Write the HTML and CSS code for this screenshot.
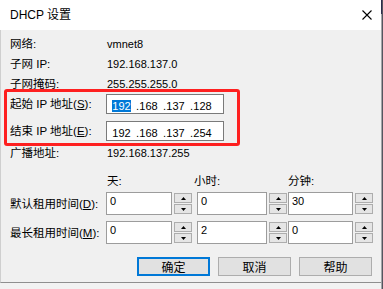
FILE: index.html
```html
<!DOCTYPE html>
<html lang="zh-CN">
<head>
<meta charset="utf-8">
<title>DHCP 设置</title>
<link rel="stylesheet" href="styles.css">
</head>
<body>
<div class="screen">
  <div class="window">
    <div class="titlebar">
      <span class="title">DHCP 设置</span>
      <span class="close"><svg width="10" height="10" viewBox="0 0 10 10"><path d="M0.5 0.5 L9.5 9.5 M9.5 0.5 L0.5 9.5" stroke="#000" stroke-width="1.1" fill="none"/></svg></span>
    </div>
    <div class="body">
      <div class="row"><span class="label">网络:</span><span class="value">vmnet8</span></div>
      <div class="row"><span class="label">子网 IP:</span><span class="value">192.168.137.0</span></div>
      <div class="row"><span class="label">子网掩码:</span><span class="value">255.255.255.0</span></div>

      <div class="row ip-row">
        <span class="label">起始 IP 地址(<u>S</u>):</span>
        <div class="ip-box">
          <span class="ip-field sel">192</span><span class="ip-dot">.</span>
          <span class="ip-field">168</span><span class="ip-dot">.</span>
          <span class="ip-field">137</span><span class="ip-dot">.</span>
          <span class="ip-field">128</span>
        </div>
      </div>
      <div class="row ip-row second">
        <span class="label">结束 IP 地址(<u>E</u>):</span>
        <div class="ip-box">
          <span class="ip-field">192</span><span class="ip-dot">.</span>
          <span class="ip-field">168</span><span class="ip-dot">.</span>
          <span class="ip-field">137</span><span class="ip-dot">.</span>
          <span class="ip-field">254</span>
        </div>
      </div>
      <div class="row broadcast"><span class="label">广播地址:</span><span class="value">192.168.137.255</span></div>

      <div class="lease-row lease-head">
        <span class="label"></span>
        <span class="c1 head">天:</span>
        <span class="c2 head">小时:</span>
        <span class="c3 head">分钟:</span>
      </div>
      <div class="lease-row spin-row">
        <span class="label">默认租用时间(<u>D</u>):</span>
        <div class="c1"><div class="spin w1"><div class="edit">0</div><div class="spinner"><span class="sbtn"><svg width="5" height="3" viewBox="0 0 5 3"><path d="M0 3 L2.5 0 L5 3 Z" fill="#000"/></svg></span><span class="sbtn"><svg width="5" height="3" viewBox="0 0 5 3"><path d="M0 0 L5 0 L2.5 3 Z" fill="#000"/></svg></span></div></div></div>
        <div class="c2"><div class="spin w2"><div class="edit">0</div><div class="spinner"><span class="sbtn"><svg width="5" height="3" viewBox="0 0 5 3"><path d="M0 3 L2.5 0 L5 3 Z" fill="#000"/></svg></span><span class="sbtn"><svg width="5" height="3" viewBox="0 0 5 3"><path d="M0 0 L5 0 L2.5 3 Z" fill="#000"/></svg></span></div></div></div>
        <div class="c3"><div class="spin w3"><div class="edit">30</div><div class="spinner"><span class="sbtn"><svg width="5" height="3" viewBox="0 0 5 3"><path d="M0 3 L2.5 0 L5 3 Z" fill="#000"/></svg></span><span class="sbtn"><svg width="5" height="3" viewBox="0 0 5 3"><path d="M0 0 L5 0 L2.5 3 Z" fill="#000"/></svg></span></div></div></div>
      </div>
      <div class="lease-row spin-row second">
        <span class="label">最长租用时间(<u>M</u>):</span>
        <div class="c1"><div class="spin w1"><div class="edit">0</div><div class="spinner"><span class="sbtn"><svg width="5" height="3" viewBox="0 0 5 3"><path d="M0 3 L2.5 0 L5 3 Z" fill="#000"/></svg></span><span class="sbtn"><svg width="5" height="3" viewBox="0 0 5 3"><path d="M0 0 L5 0 L2.5 3 Z" fill="#000"/></svg></span></div></div></div>
        <div class="c2"><div class="spin w2"><div class="edit">2</div><div class="spinner"><span class="sbtn"><svg width="5" height="3" viewBox="0 0 5 3"><path d="M0 3 L2.5 0 L5 3 Z" fill="#000"/></svg></span><span class="sbtn"><svg width="5" height="3" viewBox="0 0 5 3"><path d="M0 0 L5 0 L2.5 3 Z" fill="#000"/></svg></span></div></div></div>
        <div class="c3"><div class="spin w3"><div class="edit">0</div><div class="spinner"><span class="sbtn"><svg width="5" height="3" viewBox="0 0 5 3"><path d="M0 3 L2.5 0 L5 3 Z" fill="#000"/></svg></span><span class="sbtn"><svg width="5" height="3" viewBox="0 0 5 3"><path d="M0 0 L5 0 L2.5 3 Z" fill="#000"/></svg></span></div></div></div>
      </div>

      <div class="buttons">
        <span class="btn default">确定</span>
        <span class="btn">取消</span>
        <span class="btn">帮助</span>
      </div>
    </div>
    <div class="highlight"></div>
  </div>
  <div class="edge-right"></div>
  <div class="edge-bottom"></div>
</div>
</body>
</html>
```

FILE: styles.css
```css
html, body {
  margin: 0;
  padding: 0;
}

.screen {
  width: 383px;
  height: 289px;
  display: grid;
  grid-template-columns: 381px 2px;
  grid-template-rows: 283px 6px;
  overflow: hidden;
  background: #f2f2f2;
  font-family: "Liberation Sans", "Noto Sans CJK SC", sans-serif;
  color: #000;
}

.window {
  grid-column: 1;
  grid-row: 1;
  position: relative;
  display: flex;
  flex-direction: column;
}

.titlebar {
  height: 30px;
  flex: none;
  background: #fff;
  display: flex;
  align-items: center;
  justify-content: space-between;
  padding: 0 9px 0 10px;
  font-size: 12px;
}

.title {
  line-height: 16px;
}

.close {
  display: flex;
  margin-top: -1px;
}

.body {
  flex: 1;
  background: #f0f0f0;
  border-left: 1px solid #cfcfcf;
  border-bottom: 1px solid #8f8f8f;
  padding: 4px 9px 6px 9px;
}

.row {
  display: flex;
  align-items: center;
  height: 20px;
}

.label {
  width: 96px;
  flex: none;
  font-size: 11.5px;
  line-height: 16px;
  white-space: nowrap;
}

.label u {
  text-decoration-thickness: 1px;
  text-underline-offset: 1px;
}

.value {
  font-size: 11px;
  line-height: 14px;
  padding-left: 1px;
}

.ip-row.second {
  margin-top: 7px;
}

.ip-box {
  width: 118px;
  height: 20px;
  box-sizing: border-box;
  border: 1px solid #7a7a7a;
  background: #fff;
  display: flex;
  align-items: center;
  padding: 3px 0 0 5px;
}

.ip-field {
  width: 19px;
  text-align: center;
  font-size: 11px;
  line-height: 12px;
}

.ip-field.sel {
  background: #0078d7;
  color: #fff;
}

.ip-dot {
  width: 8px;
  text-align: right;
  font-size: 11px;
  line-height: 12px;
}

.broadcast {
  margin-top: 2px;
}

.lease-row {
  display: flex;
  align-items: center;
}

.lease-head {
  height: 20px;
  margin-top: 8px;
}

.head {
  font-size: 11.5px;
  line-height: 16px;
}

.c1 {
  width: 88px;
  flex: none;
}

.c1.head {
  padding-left: 1px;
  box-sizing: border-box;
}

.c2 {
  width: 94px;
  flex: none;
}

.c3 {
  width: 84px;
  flex: none;
}

.spin-row {
  height: 23px;
  margin-top: 1px;
}

.spin-row.second {
  margin-top: 6px;
}

.spin {
  display: flex;
  height: 23px;
}

.w1 {
  width: 86px;
}

.w2 {
  width: 90px;
  margin-left: 3px;
}

.w3 {
  width: 85px;
}

.edit {
  flex: 1;
  box-sizing: border-box;
  border: 1px solid #9c9c9c;
  background: #fff;
  font-size: 11px;
  line-height: 15px;
  padding: 1px 0 0 3px;
}

.spinner {
  width: 18px;
  flex: none;
  margin-left: 2px;
  display: flex;
  flex-direction: column;
  gap: 1px;
  padding: 1px 0;
  box-sizing: border-box;
}

.sbtn {
  flex: 1;
  box-sizing: border-box;
  border: 1px solid #adadad;
  background: #e5e5e5;
  display: flex;
  align-items: center;
  justify-content: center;
}

.buttons {
  display: flex;
  justify-content: flex-end;
  gap: 8px;
  margin-top: 13px;
}

.btn {
  width: 73px;
  height: 19px;
  box-sizing: border-box;
  border: 1px solid #adadad;
  background: #e1e1e1;
  font-size: 12px;
  display: flex;
  align-items: center;
  justify-content: center;
}

.btn.default {
  border: 2px solid #0078d7;
}

.highlight {
  position: absolute;
  left: 4px;
  top: 89px;
  width: 236px;
  height: 57px;
  box-sizing: border-box;
  border: 3px solid #fe2020;
  border-radius: 3px;
  pointer-events: none;
}

.edge-right {
  grid-column: 2;
  grid-row: 1 / span 2;
  background: linear-gradient(#2c2c4c 0 14px, #a4a4a8 14px 100%);
  border-right: 1px solid #55555f;
}

.edge-bottom {
  grid-column: 1;
  grid-row: 2;
  background: #f2f2f2;
}
```
